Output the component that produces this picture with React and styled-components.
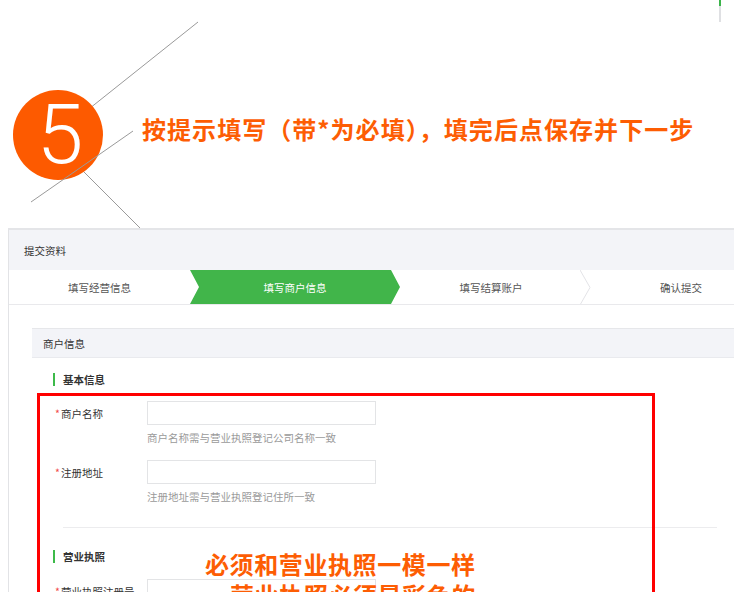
import React from "react";
import styled, { createGlobalStyle } from "styled-components";

const GlobalStyle = createGlobalStyle`
  html, body {
    margin: 0;
    padding: 0;
    background: #fff;
    overflow: hidden;
  }
  body {
    font-family: "Noto Sans CJK SC", "Noto Sans", sans-serif;
    color: #333;
  }
  * {
    box-sizing: border-box;
  }
`;

const Page = styled.div`
  width: 734px;
  height: 592px;
  overflow: hidden;
`;

const Banner = styled.div`
  position: relative;
  height: 228px;
  display: flex;
  align-items: flex-start;
  gap: 39px;
  padding: 90px 0 0 13px;
`;

const Lines = styled.svg`
  position: absolute;
  left: 0;
  top: 0;
  z-index: ${(p) => (p.$front ? 2 : 0)};
  pointer-events: none;
`;

const Circle = styled.div`
  position: relative;
  z-index: 1;
  flex: none;
  width: 90px;
  height: 90px;
  border-radius: 50%;
  background: #fd5a00;
  color: #fff;
  display: flex;
  align-items: center;
  justify-content: center;
  font-family: "Roboto", "Liberation Sans", sans-serif;
  font-weight: 300;
  font-size: 84px;
  line-height: 1;
  padding-left: 4px;
`;

const Title = styled.h1`
  margin: 24px 0 0;
  font-size: 24px;
  line-height: 30px;
  font-weight: 700;
  letter-spacing: 1.05px;
  color: #fd5d03;
  white-space: nowrap;
`;

const CornerMark = styled.div`
  position: absolute;
  left: 719px;
  top: 0;
  width: 2px;
  height: 22px;
  background: linear-gradient(#3cb44a 0 6px, #dfe0e3 6px 100%);
`;

const Panel = styled.section`
  margin-left: 8px;
  border-top: 2px solid #e4e5e8;
  border-left: 1px solid #e2e3e6;
  min-height: 400px;
`;

const PanelHeader = styled.div`
  height: 40px;
  display: flex;
  align-items: center;
  padding-left: 15px;
  background: #f3f4f8;
  font-size: 10.5px;
  color: #333;
`;

const Steps = styled.div`
  display: flex;
  height: 35px;
  border-bottom: 1px solid #e9e9ec;
  overflow: hidden;
`;

const Step = styled.div`
  position: relative;
  flex: none;
  width: ${(p) => p.$width}px;
  margin-right: ${(p) => (p.$active ? -9 : 0)}px;
  display: flex;
  align-items: center;
  justify-content: center;
  font-size: 10.5px;
  color: ${(p) => (p.$active ? "#fff" : "#555")};
  background: ${(p) => (p.$active ? "#41b54a" : "transparent")};
  clip-path: ${(p) =>
    p.$active
      ? "polygon(0 0, calc(100% - 9px) 0, 100% 50%, calc(100% - 9px) 100%, 0 100%, 9px 50%)"
      : "none"};
`;

const Chevron = styled.svg`
  position: absolute;
  right: 0;
  top: 0;
`;

const PanelBody = styled.div`
  padding: 23px 0 0 23px;
`;

const CardHeader = styled.div`
  height: 30px;
  display: flex;
  align-items: center;
  padding-left: 11px;
  background: #f3f4f8;
  border-top: 1px solid #e6e7ea;
  border-bottom: 1px solid #e9eaee;
  font-size: 10.5px;
  color: #333;
`;

const CardBody = styled.div`
  position: relative;
  padding: 13px 0 0 21px;
`;

const SectionTitle = styled.div`
  display: flex;
  align-items: center;
  gap: 8px;
  margin-top: ${(p) => p.$top || 0}px;
  height: 16px;
  font-size: 10.5px;
  font-weight: 700;
  color: #333;

  &::before {
    content: "";
    width: 2px;
    height: 13px;
    background: #3dba4a;
  }
`;

const Field = styled.div`
  display: flex;
  align-items: flex-start;
  margin-top: ${(p) => p.$top}px;
  padding-left: 2px;
`;

const Label = styled.div`
  width: 92px;
  height: 24px;
  display: flex;
  align-items: center;
  font-size: 10.5px;
  color: #333;
  white-space: nowrap;
`;

const Star = styled.span`
  color: #f24a4a;
  margin-right: 1px;
`;

const Control = styled.div`
  display: flex;
  flex-direction: column;
`;

const Input = styled.div`
  width: 229px;
  height: 24px;
  border: 1px solid #e3e4e6;
  background: #fff;
`;

const Hint = styled.div`
  margin-top: 6px;
  font-size: 10.5px;
  line-height: 14px;
  color: #9a9a9a;
`;

const Divider = styled.div`
  margin: 23px 0 0 10px;
  width: 654px;
  height: 1px;
  background: #ececee;
`;

const Highlight = styled.div`
  position: absolute;
  left: 5px;
  top: 35px;
  width: 618px;
  height: 300px;
  border: 3px solid #ff0000;
  pointer-events: none;
`;

const Note = styled.div`
  position: absolute;
  left: 173px;
  top: 190px;
  font-size: 24px;
  line-height: 31px;
  font-weight: 700;
  letter-spacing: 0.6px;
  color: #fd5d03;
  white-space: nowrap;
`;

const NoteLine = styled.div`
  padding-left: ${(p) => p.$indent || 0}px;
`;

const steps = [
  { label: "填写经营信息", width: 181 },
  { label: "填写商户信息", width: 210, active: true },
  { label: "填写结算账户", width: 200, chevron: true },
  { label: "确认提交", width: 180 },
];

export default function App() {
  return (
    <Page>
      <GlobalStyle />
      <Banner>
        <Lines width="734" height="228">
          <line x1="198" y1="22" x2="60" y2="132" stroke="#9a9a9a" strokeWidth="1" />
          <line x1="80" y1="168" x2="141" y2="229" stroke="#9a9a9a" strokeWidth="1" />
        </Lines>
        <Circle>5</Circle>
        <Lines $front width="734" height="228">
          <line x1="133" y1="131" x2="31" y2="202" stroke="#9a9a9a" strokeWidth="1" />
        </Lines>
        <Title>按提示填写（带*为必填），填完后点保存并下一步</Title>
        <CornerMark />
      </Banner>

      <Panel>
        <PanelHeader>提交资料</PanelHeader>
        <Steps>
          {steps.map((s) => (
            <Step key={s.label} $width={s.width} $active={s.active}>
              {s.label}
              {s.chevron && (
                <Chevron width="11" height="35">
                  <polyline points="0,0 10,17.5 0,35" fill="none" stroke="#e3e4e7" strokeWidth="1" />
                </Chevron>
              )}
            </Step>
          ))}
        </Steps>

        <PanelBody>
          <CardHeader>商户信息</CardHeader>
          <CardBody>
            <SectionTitle>基本信息</SectionTitle>
            <Field $top={14}>
              <Label>
                <Star>*</Star>商户名称
              </Label>
              <Control>
                <Input />
                <Hint>商户名称需与营业执照登记公司名称一致</Hint>
              </Control>
            </Field>
            <Field $top={15}>
              <Label>
                <Star>*</Star>注册地址
              </Label>
              <Control>
                <Input />
                <Hint>注册地址需与营业执照登记住所一致</Hint>
              </Control>
            </Field>
            <Divider />
            <SectionTitle $top={20}>营业执照</SectionTitle>
            <Field $top={15}>
              <Label>
                <Star>*</Star>营业执照注册号
              </Label>
              <Control>
                <Input />
              </Control>
            </Field>

            <Highlight />
            <Note>
              <NoteLine>必须和营业执照一模一样</NoteLine>
              <NoteLine $indent={25}>营业执照必须是彩色的</NoteLine>
            </Note>
          </CardBody>
        </PanelBody>
      </Panel>
    </Page>
  );
}
